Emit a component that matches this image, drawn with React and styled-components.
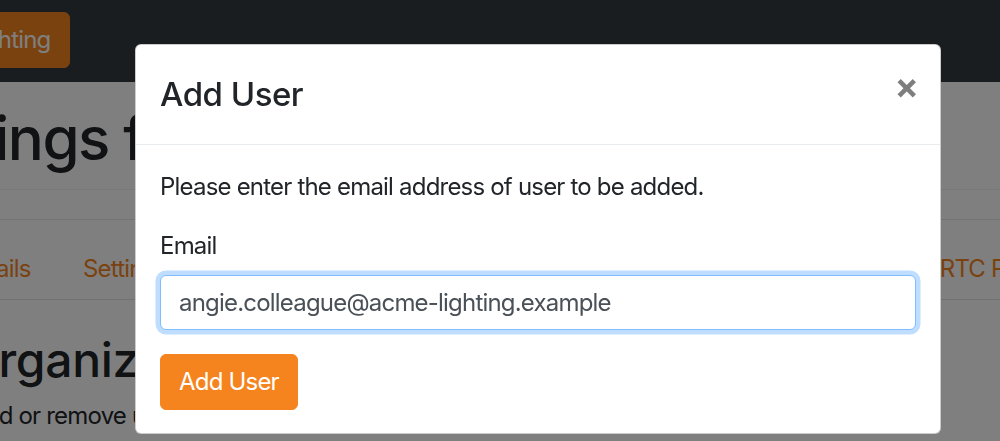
import React from 'react'
import styled, { createGlobalStyle } from 'styled-components'

const GlobalStyle = createGlobalStyle`
  html, body {
    margin: 0;
    padding: 0;
    background: #fff;
    font-family: Inter, "Noto Sans", "Liberation Sans", sans-serif;
    color: #212529;
    overflow: hidden;
  }
  * { box-sizing: border-box; }
`

const Page = styled.div`
  width: 1000px;
  height: 441px;
  overflow: hidden;
`

const Navbar = styled.nav`
  height: 82px;
  background: #343a40;
  display: flex;
  align-items: flex-start;
  padding-top: 12px;
`

const BrandButton = styled.button`
  margin-left: ${({ $pull }) => -$pull}px;
  height: 56px;
  padding: 0 18px;
  border: 1px solid #f5841f;
  border-radius: 6px;
  background: #f5841f;
  color: #fff;
  font: 400 24px/36px Inter, "Noto Sans", sans-serif;
  letter-spacing: -0.8px;
`

const Container = styled.main`
  margin-left: -31px;
  width: 1600px;
`

const Title = styled.h1`
  margin: 20px 0 0 ${({ $pull }) => -$pull}px;
  font-size: 60px;
  font-weight: 500;
  line-height: 72px;
  letter-spacing: -1.5px;
  white-space: nowrap;
`

const Rule = styled.div`
  height: ${({ $h }) => $h}px;
  border-bottom: 1px solid ${({ $c }) => $c};
`

const Tabs = styled.ul`
  list-style: none;
  margin: 18px 0 0 ${({ $pull }) => -$pull}px;
  padding: 0;
  display: flex;
  border-bottom: 1px solid #dee2e6;
  white-space: nowrap;
`

const Tab = styled.li`
  padding: 12px 25.2px;
  border: 1px solid transparent;
  margin-bottom: -1px;
  color: #f5841f;
  font-size: 24px;
  line-height: 36px;
  letter-spacing: -0.8px;
`

const Heading = styled.h2`
  margin: 31px 0 0 ${({ $pull }) => -$pull}px;
  font-size: 48px;
  font-weight: 500;
  line-height: 57px;
  letter-spacing: -0.3px;
  white-space: nowrap;
`

const Lead = styled.p`
  margin: 10px 0 0;
  font-size: 24px;
  line-height: 36px;
  letter-spacing: -0.8px;
  white-space: nowrap;
`

const Backdrop = styled.div`
  position: fixed;
  inset: 0;
  background: rgba(0, 0, 0, 0.5);
  padding: 44px 0 0 135px;
`

const Dialog = styled.div`
  width: 806px;
  background: #fff;
  border: 1px solid rgba(0, 0, 0, 0.2);
  border-radius: 6px;
  display: flex;
  flex-direction: column;
`

const Header = styled.div`
  display: flex;
  align-items: flex-start;
  padding: 24px;
  border-bottom: 1px solid #e9ecef;
`

const ModalTitle = styled.h5`
  margin: 0;
  font-size: 33px;
  font-weight: 500;
  line-height: 51px;
  letter-spacing: -0.5px;
  color: #212529;
`

const Close = styled.button`
  margin: -24px -24px -24px auto;
  padding: 23px 21px 24px;
  border: 0;
  background: transparent;
  color: #000;
  opacity: 0.5;
  font: 700 36px/1 Inter, "Noto Sans", sans-serif;
`

const Body = styled.div`
  padding: 24px 24px 23px;
`

const Text = styled.p`
  margin: 0 0 23px;
  font-size: 24px;
  line-height: 36px;
  letter-spacing: -0.8px;
`

const Label = styled.label`
  display: block;
  margin-bottom: 11px;
  font-size: 24px;
  line-height: 36px;
  letter-spacing: -0.8px;
`

const Input = styled.input`
  display: block;
  width: 100%;
  height: 55px;
  padding: 9px 18px;
  border: 1px solid #80bdff;
  border-radius: 6px;
  outline: 0;
  box-shadow: 0 0 0 4.5px rgba(0, 123, 255, 0.25);
  color: #495057;
  font: 400 24px/36px Inter, "Noto Sans", sans-serif;
  letter-spacing: -0.8px;
`

const Group = styled.div`
  margin-bottom: 24px;
`

const PrimaryButton = styled.button`
  height: 56px;
  padding: 0 18px;
  border: 1px solid #f5841f;
  border-radius: 6px;
  background: #f5841f;
  color: #fff;
  font: 400 24px/36px Inter, "Noto Sans", sans-serif;
  letter-spacing: -0.8px;
`

const tabs = ['Details', 'Settings', 'Users', 'Rooms', 'Devices', 'Schedules', 'Integrations', 'RTC Providers']

export default function App() {
  return (
    <Page>
      <GlobalStyle />
      <Navbar>
        <BrandButton $pull={121}>Acme Lighting</BrandButton>
      </Navbar>
      <Container>
        <Title $pull={82}>Settings for Acme Lighting</Title>
        <Rule $h={16} $c="#eef0f2" />
        <Rule $h={30} $c="#e3e6e9" />
        <Tabs $pull={36}>
          {tabs.map((t) => (
            <Tab key={t}>{t}</Tab>
          ))}
        </Tabs>
        <Heading $pull={7}>Organization Users</Heading>
        <Lead>Add or remove users in this organization.</Lead>
      </Container>
      <Backdrop>
        <Dialog>
          <Header>
            <ModalTitle>Add User</ModalTitle>
            <Close aria-label="Close">×</Close>
          </Header>
          <Body>
            <Text>Please enter the email address of user to be added.</Text>
            <Group>
              <Label htmlFor="email">Email</Label>
              <Input id="email" type="email" defaultValue="angie.colleague@acme-lighting.example" />
            </Group>
            <PrimaryButton>Add User</PrimaryButton>
          </Body>
        </Dialog>
      </Backdrop>
    </Page>
  )
}
